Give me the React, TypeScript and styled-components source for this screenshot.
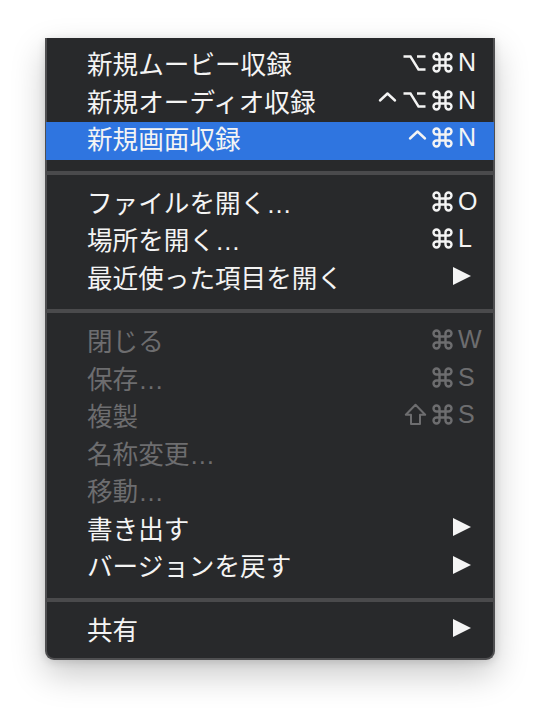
import styled, { createGlobalStyle } from 'styled-components';

const GlobalStyle = createGlobalStyle`
  html, body {
    margin: 0;
    padding: 0;
    background: #ffffff;
  }
`;

const Page = styled.div`
  width: 540px;
  height: 712px;
  padding: 38px 0 0 45px;
  box-sizing: border-box;
  font-family: "Liberation Sans", "Noto Sans CJK JP", sans-serif;
`;

const Menu = styled.div`
  width: 450px;
  box-sizing: border-box;
  background: #28292b;
  border: 2px solid #4f4f51;
  border-top: none;
  border-radius: 0 0 9px 9px;
  padding: 9px 0 8px;
  box-shadow: 0 14px 34px rgba(0, 0, 0, 0.22), 0 2px 8px rgba(0, 0, 0, 0.12);
`;

const Row = styled.div<{ $active?: boolean; $disabled?: boolean }>`
  display: flex;
  align-items: center;
  height: 37.5px;
  box-sizing: border-box;
  padding: 0 11px 6px 41px;
  font-size: 25.6px;
  color: ${(p) => (p.$disabled ? '#6d6d6f' : '#f4f4f4')};
  background: ${(p) => (p.$active ? '#2f75e0' : 'transparent')};
  margin: 0 -1px;
`;

const Label = styled.span`
  flex: 1;
  white-space: nowrap;
`;

const Mods = styled.span`
  display: flex;
  align-items: center;
  gap: 5px;
  margin-right: 5px;

  svg {
    display: block;
    fill: none;
    stroke: currentColor;
    stroke-width: 2.4;
    stroke-linecap: round;
    stroke-linejoin: round;
  }
`;

const Key = styled.span`
  width: 25px;
  font-size: 25px;
  text-align: left;
`;

const Arrow = styled.span`
  width: 0;
  height: 0;
  border-left: 18px solid #f4f4f4;
  border-top: 9.5px solid transparent;
  border-bottom: 9.5px solid transparent;
  margin-right: 12px;
`;

const Separator = styled.div`
  height: 4px;
  margin: 11px -1px;
  background: #4a4a4c;
`;

const CommandIcon = () => (
  <svg width="21" height="21" viewBox="1.5 1.5 21 21">
    <path d="M15 6v12a3 3 0 1 0 3-3H6a3 3 0 1 0 3 3V6a3 3 0 1 0-3 3h12a3 3 0 1 0-3-3" />
  </svg>
);

const OptionIcon = () => (
  <svg width="25" height="18" viewBox="0 0 25 18">
    <path d="M1.5 2.5h7l8 13h7M15 2.5h8.5" strokeLinecap="butt" strokeLinejoin="miter" />
  </svg>
);

const ControlIcon = () => (
  <svg width="19" height="18" viewBox="0 0 19 18">
    <path d="M2 9.5 9.5 2.5 17 9.5" />
  </svg>
);

const ShiftIcon = () => (
  <svg width="23" height="23" viewBox="0 0 23 23">
    <path d="M11.5 1.8 21.2 11.8H16V21H7V11.8H1.8Z" strokeWidth="2" />
  </svg>
);

type Mod = 'cmd' | 'opt' | 'ctrl' | 'shift';

const modIcons: Record<Mod, () => JSX.Element> = {
  cmd: CommandIcon,
  opt: OptionIcon,
  ctrl: ControlIcon,
  shift: ShiftIcon,
};

type Item = {
  label: string;
  mods?: Mod[];
  keyChar?: string;
  submenu?: boolean;
  active?: boolean;
  disabled?: boolean;
};

const groups: Item[][] = [
  [
    { label: '新規ムービー収録', mods: ['opt', 'cmd'], keyChar: 'N' },
    { label: '新規オーディオ収録', mods: ['ctrl', 'opt', 'cmd'], keyChar: 'N' },
    { label: '新規画面収録', mods: ['ctrl', 'cmd'], keyChar: 'N', active: true },
  ],
  [
    { label: 'ファイルを開く…', mods: ['cmd'], keyChar: 'O' },
    { label: '場所を開く…', mods: ['cmd'], keyChar: 'L' },
    { label: '最近使った項目を開く', submenu: true },
  ],
  [
    { label: '閉じる', mods: ['cmd'], keyChar: 'W', disabled: true },
    { label: '保存…', mods: ['cmd'], keyChar: 'S', disabled: true },
    { label: '複製', mods: ['shift', 'cmd'], keyChar: 'S', disabled: true },
    { label: '名称変更…', disabled: true },
    { label: '移動…', disabled: true },
    { label: '書き出す', submenu: true },
    { label: 'バージョンを戻す', submenu: true },
  ],
  [{ label: '共有', submenu: true }],
];

const App = () => (
  <>
    <GlobalStyle />
    <Page>
      <Menu>
        {groups.map((group, gi) => (
          <div key={gi}>
            {gi > 0 && <Separator />}
            {group.map((item) => (
              <Row key={item.label} $active={item.active} $disabled={item.disabled}>
                <Label>{item.label}</Label>
                {item.keyChar && (
                  <>
                    <Mods>
                      {item.mods?.map((m, i) => {
                        const Icon = modIcons[m];
                        return <Icon key={i} />;
                      })}
                    </Mods>
                    <Key>{item.keyChar}</Key>
                  </>
                )}
                {item.submenu && <Arrow />}
              </Row>
            ))}
          </div>
        ))}
      </Menu>
    </Page>
  </>
);

export default App;
